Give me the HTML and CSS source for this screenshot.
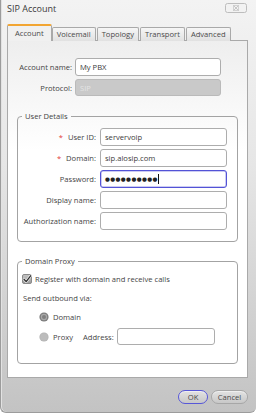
FILE: index.html
```html
<!DOCTYPE html>
<html>
<head>
<meta charset="utf-8">
<title>SIP Account</title>
<link rel="stylesheet" href="styles.css">
</head>
<body>
<div class="window">
  <div class="titlebar">
    <span class="title">SIP Account</span>
    <span class="close">
      <svg width="22" height="10" viewBox="0 0 22 10">
        <rect x="0.5" y="0.5" width="21" height="9" rx="2" fill="#f2f2f2" stroke="#bdbdbd"/>
        <rect x="8.5" y="2.5" width="5" height="5" fill="none" stroke="#d2d2d2"/>
        <path d="M8.5 2.5 L13.5 7.5 M13.5 2.5 L8.5 7.5" stroke="#c6c6c6" stroke-width="1"/>
      </svg>
    </span>
  </div>
  <div class="tabs">
    <div class="tab active">Account</div>
    <div class="tab first">Voicemail</div>
    <div class="tab">Topology</div>
    <div class="tab">Transport</div>
    <div class="tab">Advanced</div>
  </div>
  <div class="panel">
    <div class="form-grid top">
      <span class="lbl">Account name:</span><div class="field">My PBX</div>
      <span class="lbl">Protocol:</span><div class="field disabled">SIP</div>
    </div>
    <fieldset class="group details">
      <legend>User Details</legend>
      <div class="form-grid inner">
        <span class="lbl"><span class="req">*</span>User ID:</span><div class="field">servervoip</div>
        <span class="lbl"><span class="req">*</span>Domain:</span><div class="field">sip.alosip.com</div>
        <span class="lbl">Password:</span><div class="field focus"><span class="dots">●●●●●●●●●●</span><span class="caret"></span></div>
        <span class="lbl">Display name:</span><div class="field"></div>
        <span class="lbl">Authorization name:</span><div class="field"></div>
      </div>
    </fieldset>
    <fieldset class="group proxy">
      <legend>Domain Proxy</legend>
      <div class="check-row">
        <span class="checkbox">
          <svg width="10" height="10" viewBox="0 0 10 10">
            <defs><linearGradient id="cb" x1="0" y1="0" x2="0" y2="1"><stop offset="0" stop-color="#c4c4c4"/><stop offset="1" stop-color="#9c9c9c"/></linearGradient></defs>
            <rect x="0.5" y="0.5" width="9" height="9" rx="1.5" fill="url(#cb)" stroke="#8a8a8a"/>
            <path d="M2 5.2 L4.2 7.6 L8.6 1.8" fill="none" stroke="#f4f4f4" stroke-width="2.6" stroke-linecap="round" stroke-linejoin="round"/>
            <path d="M2 5.2 L4.2 7.6 L8.6 1.8" fill="none" stroke="#2e2e2e" stroke-width="1.3" stroke-linecap="round" stroke-linejoin="round"/>
          </svg>
        </span>
        <span>Register with domain and receive calls</span>
      </div>
      <div class="send">Send outbound via:</div>
      <div class="radio-row">
        <svg class="radio" width="10" height="10" viewBox="0 0 10 10">
          <circle cx="5" cy="5" r="4.6" fill="#7e7e7e"/>
          <circle cx="5" cy="5" r="3.2" fill="#a9a9a9"/>
          <circle cx="5" cy="5" r="2" fill="#808080"/>
        </svg>
        <span>Domain</span>
      </div>
      <div class="radio-row">
        <svg class="radio" width="10" height="10" viewBox="0 0 10 10">
          <circle cx="5" cy="5" r="4.6" fill="#b4b4b4"/>
          <circle cx="5" cy="5" r="3.8" fill="#bcbcbc"/>
        </svg>
        <span class="proxy-lbl">Proxy</span>
        <span class="addr-lbl">Address:</span>
        <div class="field addr"></div>
      </div>
    </fieldset>
  </div>
  <div class="footer">
    <button class="btn ok">OK</button>
    <button class="btn cancel">Cancel</button>
  </div>
</div>
</body>
</html>
```

FILE: styles.css
```css
html, body {
  margin: 0;
  padding: 0;
}
body {
  width: 256px;
  height: 413px;
  overflow: hidden;
  font-family: "Open Sans", "Liberation Sans", sans-serif;
  font-size: 7.6px;
  line-height: 10px;
  color: #444;
}
.window {
  box-sizing: border-box;
  width: 256px;
  height: 413px;
  display: flex;
  flex-direction: column;
  background: linear-gradient(#f3f3f3, #e6e6e6 40%, #c3c3c3);
  border-left: 1px solid #9c9c9c;
  border-bottom: 1px solid #9c9c9c;
  border-radius: 0 0 6px 6px;
  box-shadow: inset 1px 0 #e2e2e2;
}
.titlebar {
  box-sizing: border-box;
  height: 25px;
  display: flex;
  justify-content: space-between;
  align-items: flex-start;
  padding: 3px 9px 0 6px;
}
.title {
  font-size: 9px;
  line-height: 12px;
  color: #3a3a3a;
}
.close {
  display: block;
  height: 10px;
}
.close svg { display: block; }

.tabs {
  display: flex;
  align-items: flex-end;
  height: 16px;
  margin-left: 6px;
  margin-bottom: -1px;
  position: relative;
  z-index: 1;
}
.tab {
  box-sizing: border-box;
  height: 14px;
  padding: 1px 4px 0;
  margin-left: 1px;
  border: 1px solid #a9a9a9;
  border-bottom: none;
  border-radius: 2px 2px 0 0;
  background: linear-gradient(#f6f6f6, #e1e1e1);
  color: #4a4a4a;
  line-height: 11px;
  white-space: nowrap;
}
.tab.first { margin-left: 0; }
.tab.active {
  margin-left: 0;
  height: 17px;
  padding: 2px 7px 0;
  border-top: 2px solid #f2a532;
  background: #f0f0f0;
  line-height: 10px;
}

.panel {
  flex: 1;
  margin: 0 8px 0 6px;
  border: 1px solid #a9a9a9;
  background: linear-gradient(#eeeeee, #ffffff 110px);
  padding-top: 17px;
}
.form-grid {
  display: grid;
  row-gap: 3px;
  align-items: center;
}
.form-grid.top {
  grid-template-columns: 64px 146px;
  column-gap: 3px;
}
.form-grid.inner {
  grid-template-columns: 1fr 127px;
  column-gap: 4px;
}
.lbl {
  text-align: right;
  white-space: nowrap;
}
.req {
  color: #e23a3a;
  margin-right: 5px;
}
.field {
  box-sizing: border-box;
  height: 18px;
  border: 1px solid #adadad;
  border-radius: 3px;
  background: #fff;
  padding-left: 4px;
  line-height: 16px;
  color: #3a3a3a;
  display: flex;
  align-items: center;
}
.field.disabled {
  height: 17px;
  background: #c9c9c9;
  border-color: #bababa;
  color: #e4e4e4;
}
.field.focus {
  border-color: #5353d6;
  box-shadow: inset 0 0 0 0.5px #9a9ae8;
}
.dots {
  font-family: "DejaVu Sans", sans-serif;
  font-size: 5.6px;
  letter-spacing: 0.4px;
  color: #222;
}
.caret {
  display: inline-block;
  width: 1px;
  height: 10px;
  background: #111;
}

.group {
  margin: 0 9px;
  padding: 7px 10px 11px 4px;
  border: 1px solid #a3a3a3;
  border-radius: 4px;
  min-width: 0;
}
.group legend {
  padding: 0 3px;
  line-height: 10px;
}
.details { margin-top: 15px; }
.proxy {
  margin-top: 14px;
  padding: 8px 10px 18px 4px;
}
.check-row {
  display: flex;
  align-items: center;
  height: 10px;
  gap: 3px;
}
.checkbox { display: block; height: 10px; }
.checkbox svg { display: block; }
.send {
  margin-top: 9px;
  padding-left: 1px;
  height: 10px;
}
.radio-row {
  display: flex;
  align-items: center;
  margin-top: 9px;
  padding-left: 17px;
  height: 10px;
}
.radio-row + .radio-row {
  margin-top: 6px;
  height: 17px;
}
.radio {
  display: block;
  margin-right: 4px;
  flex: none;
}
.proxy-lbl { width: 30px; }
.addr-lbl { margin-right: 3px; }
.field.addr {
  width: 98px;
  height: 17px;
}

.footer {
  box-sizing: border-box;
  height: 34px;
  display: flex;
  justify-content: flex-end;
  align-items: flex-start;
  gap: 3px;
  padding: 12px 8px 0 0;
}
.btn {
  box-sizing: border-box;
  height: 14px;
  padding: 0;
  border: 1px solid #a7a7a7;
  border-radius: 7px;
  background: linear-gradient(#e2e2e2, #c8c8c8);
  font-family: "Open Sans", "Liberation Sans", sans-serif;
  font-size: 7.6px;
  line-height: 12px;
  color: #4a4a4a;
  box-shadow: inset 0 1px 0 #efefef;
}
.btn.ok {
  width: 30px;
  border-color: #5757d8;
}
.btn.cancel { width: 37px; }
```
